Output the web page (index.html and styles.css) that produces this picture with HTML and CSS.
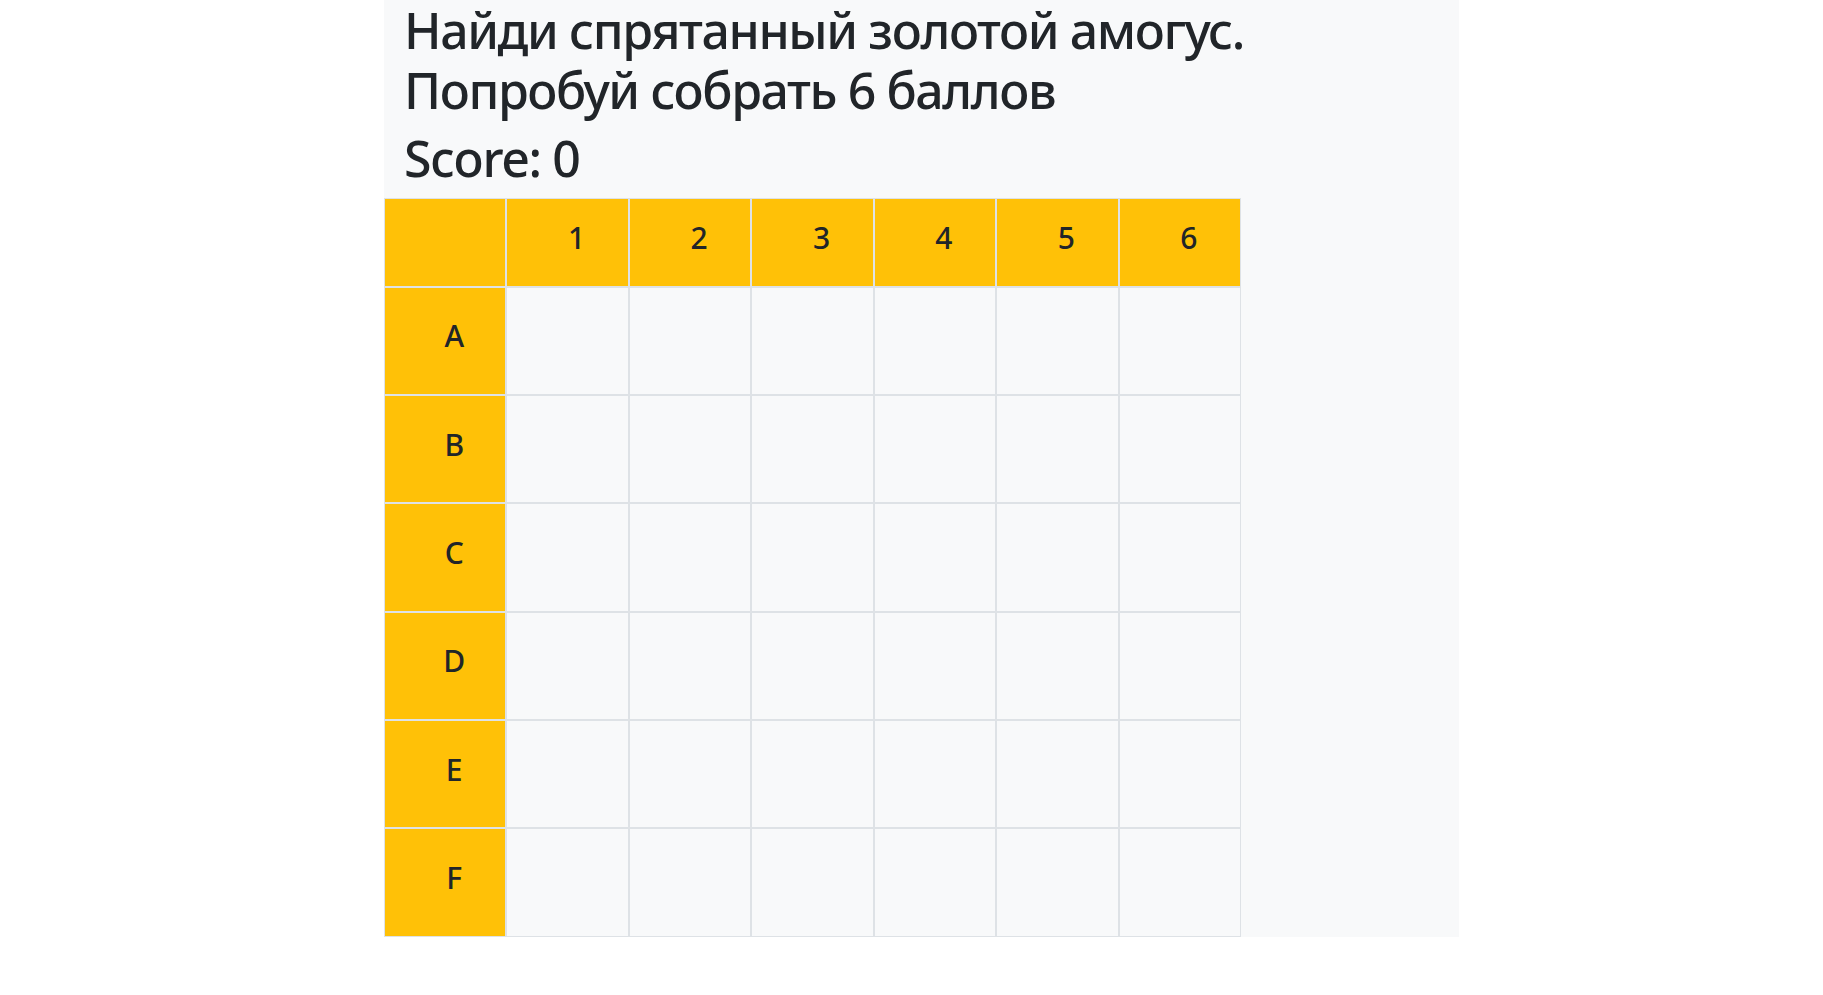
FILE: index.html
```html
<!DOCTYPE html>
<html lang="ru">
<head>
<meta charset="utf-8">
<title>Амогус</title>
<link rel="stylesheet" href="styles.css">
</head>
<body>
<main class="game">
  <h1 class="title">Найди спрятанный золотой амогус.<br>Попробуй собрать 6 баллов</h1>
  <h1 class="score">Score: 0</h1>
  <table class="board">
    <thead>
      <tr class="head-row">
        <th class="label"></th>
        <th class="label">1</th>
        <th class="label">2</th>
        <th class="label">3</th>
        <th class="label">4</th>
        <th class="label">5</th>
        <th class="label">6</th>
      </tr>
    </thead>
    <tbody>
      <tr class="row"><th class="label">A</th><td class="cell"></td><td class="cell"></td><td class="cell"></td><td class="cell"></td><td class="cell"></td><td class="cell"></td></tr>
      <tr class="row"><th class="label">B</th><td class="cell"></td><td class="cell"></td><td class="cell"></td><td class="cell"></td><td class="cell"></td><td class="cell"></td></tr>
      <tr class="row"><th class="label">C</th><td class="cell"></td><td class="cell"></td><td class="cell"></td><td class="cell"></td><td class="cell"></td><td class="cell"></td></tr>
      <tr class="row"><th class="label">D</th><td class="cell"></td><td class="cell"></td><td class="cell"></td><td class="cell"></td><td class="cell"></td><td class="cell"></td></tr>
      <tr class="row"><th class="label">E</th><td class="cell"></td><td class="cell"></td><td class="cell"></td><td class="cell"></td><td class="cell"></td><td class="cell"></td></tr>
      <tr class="row"><th class="label">F</th><td class="cell"></td><td class="cell"></td><td class="cell"></td><td class="cell"></td><td class="cell"></td><td class="cell"></td></tr>
    </tbody>
  </table>
</main>
</body>
</html>
```
FILE: styles.css
```css
html, body {
  margin: 0;
  padding: 0;
  background: #ffffff;
}

body {
  font-family: "Noto Sans", "Open Sans", "DejaVu Sans", sans-serif;
  color: #212529;
}

.game {
  width: 1075px;
  margin-left: 384px;
  background: #f8f9fa;
  display: flex;
  flex-direction: column;
  align-items: flex-start;
}

.title,
.score {
  font-size: 50px;
  line-height: 60px;
  font-weight: 500;
  margin: 0 0 10px 0;
  padding-left: 20px;
  letter-spacing: -1.4px;
}

.title {
  margin-bottom: 8px;
}

.board {
  border-collapse: separate;
  border-spacing: 0;
  table-layout: fixed;
  width: 857px;
}

.board th,
.board td {
  border: 1px solid #dee2e6;
  box-sizing: border-box;
}

.label {
  background: #ffc107;
  font-size: 30px;
  font-weight: 500;
  line-height: 45px;
  text-align: center;
  vertical-align: middle;
  padding: 0 0 10px 18px;
  color: #212529;
}

.cell {
  background: #f8f9fa;
  padding: 0;
}

.head-row > th {
  height: 88.5px;
}

.row > th,
.row > td {
  height: 108.4px;
}
```
